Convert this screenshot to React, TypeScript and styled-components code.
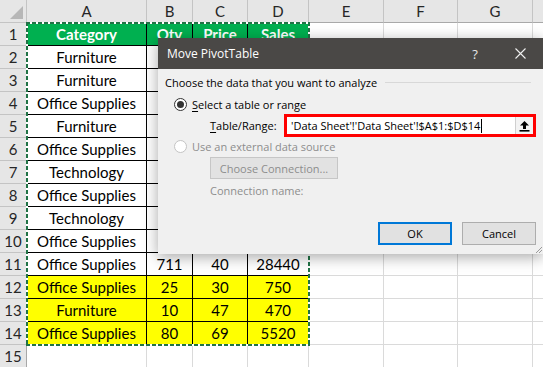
import React from "react";
import styled, { createGlobalStyle, css } from "styled-components";

const GlobalStyle = createGlobalStyle`
  html, body {
    margin: 0;
    padding: 0;
    background: #fff;
    overflow: hidden;
  }
`;

// last column (H) is only partly on screen, its letter is off to the right
const COLS = ["A", "B", "C", "D", "E", "F", "G", ""];

type Row = [string, number, number, number];

const ROWS: Row[] = [
  ["Furniture", 12, 25, 300],
  ["Furniture", 15, 20, 300],
  ["Office Supplies", 30, 12, 360],
  ["Furniture", 11, 45, 495],
  ["Office Supplies", 22, 15, 330],
  ["Technology", 14, 60, 840],
  ["Office Supplies", 40, 10, 400],
  ["Technology", 13, 80, 1040],
  ["Office Supplies", 50, 8, 400],
  ["Office Supplies", 711, 40, 28440],
  ["Office Supplies", 25, 30, 750],
  ["Furniture", 10, 47, 470],
  ["Office Supplies", 80, 69, 5520],
];

const Page = styled.div`
  position: relative;
  width: 543px;
  height: 367px;
  overflow: hidden;
  font-family: Lato, "Open Sans", sans-serif;
`;

const Sheet = styled.div`
  display: grid;
  grid-template-columns: 27px 120px 46px 55px 61px 75px 74px 75px 40px;
  grid-auto-rows: 23px;
`;

const HeaderBase = css`
  box-sizing: border-box;
  background: #e6e6e6;
  border-right: 1px solid #c4c4c4;
  border-bottom: 1px solid #c4c4c4;
  color: #262626;
  font-size: 15px;
  display: flex;
  align-items: center;
  justify-content: center;
`;

const Corner = styled.div`
  ${HeaderBase};
  position: relative;

  &::after {
    content: "";
    position: absolute;
    right: 3px;
    bottom: 3px;
    border-style: solid;
    border-width: 0 0 13px 13px;
    border-color: transparent transparent #b7b7b7 transparent;
  }
`;

const ColHead = styled.div`
  ${HeaderBase};
  border-bottom-color: #a8a8a8;
`;

const RowHead = styled.div`
  ${HeaderBase};
  border-right-color: #a8a8a8;
`;

type Kind = "head" | "data" | "yellow" | "empty";

const Cell = styled.div<{ $kind: Kind }>`
  box-sizing: border-box;
  display: flex;
  align-items: center;
  justify-content: center;
  font-size: 15px;
  white-space: nowrap;
  overflow: hidden;
  color: #000;
  border-right: 1px solid #000;
  border-bottom: 1px solid #000;
  background: #fff;

  ${(p) =>
    p.$kind === "head" &&
    css`
      background: #00b050;
      color: #fff;
      font-weight: 700;
    `}
  ${(p) =>
    p.$kind === "yellow" &&
    css`
      background: #ffff00;
    `}
  ${(p) =>
    p.$kind === "empty" &&
    css`
      border-right-color: #dadada;
      border-bottom-color: #dadada;
    `}
`;

const Ants = styled.div`
  position: absolute;
  left: 26px;
  top: 22px;
  width: 284px;
  height: 324px;
  pointer-events: none;
  background:
    repeating-linear-gradient(90deg, #217346 0 4px, #fff 4px 6px) top / 100% 2px no-repeat,
    repeating-linear-gradient(90deg, #217346 0 4px, #fff 4px 6px) bottom / 100% 2px no-repeat,
    repeating-linear-gradient(180deg, #217346 0 4px, #fff 4px 6px) left / 2px 100% no-repeat,
    repeating-linear-gradient(180deg, #217346 0 4px, #fff 4px 6px) right / 2px 100% no-repeat;
`;

/* dialog */

const Dialog = styled.div`
  position: absolute;
  left: 158px;
  top: 38px;
  width: 385px;
  height: 216px;
  display: flex;
  flex-direction: column;
  background: #f0f0f0;
  box-shadow: 0 3px 14px rgba(0, 0, 0, 0.35);
  font-family: "Open Sans", "Noto Sans", sans-serif;
  font-size: 11px;
  color: #000;
`;

const TitleBar = styled.div`
  height: 31px;
  flex: none;
  display: flex;
  align-items: center;
  background: #4a4846;
  color: #fff;
  padding-left: 9px;
  font-size: 12px;
`;

const Title = styled.div`
  flex: 1;
`;

const TitleIcon = styled.div<{ $w: number }>`
  width: ${(p) => p.$w}px;
  display: flex;
  justify-content: center;
  color: #e8e8e8;
  font-size: 13px;
`;

const Body = styled.div`
  flex: 1;
  display: flex;
  flex-direction: column;
  padding: 5px 7px 9px 7px;
  position: relative;
`;

const Heading = styled.div`
  display: flex;
  align-items: center;
  height: 16px;

  &::after {
    content: "";
    flex: 1;
    height: 1px;
    background: #d8d8d8;
    margin: 0 5px 0 8px;
  }
`;

const RadioRow = styled.label<{ $disabled?: boolean; $top: number }>`
  display: flex;
  align-items: center;
  gap: 5px;
  height: 16px;
  margin-top: ${(p) => p.$top}px;
  padding-left: 9px;
  color: ${(p) => (p.$disabled ? "#8d8d8d" : "#000")};
`;

const Radio = styled.span<{ $checked?: boolean; $disabled?: boolean }>`
  box-sizing: border-box;
  width: 13px;
  height: 13px;
  border-radius: 50%;
  background: #fff;
  border: 1px solid ${(p) => (p.$disabled ? "#c4c4c4" : "#333")};
  display: flex;
  align-items: center;
  justify-content: center;

  &::after {
    content: "";
    width: 7px;
    height: 7px;
    border-radius: 50%;
    background: ${(p) => (p.$checked ? "#333" : "transparent")};
  }
`;

// access key: first letter underlined
const AccessText = styled.span`
  display: inline-block;

  &::first-letter {
    text-decoration: underline;
    text-underline-offset: 2px;
  }
`;

const RangeRow = styled.div`
  display: flex;
  align-items: center;
  margin-top: 2px;
  padding-left: 45px;
`;

const RangeLabel = styled(AccessText)`
  width: 74px;
  flex: none;
`;

const RangeBox = styled.div`
  flex: 1;
  height: 23px;
  box-sizing: border-box;
  border: 3px solid #ff0000;
  display: flex;
  background: #fff;
`;

const RangeText = styled.div`
  flex: 1;
  display: flex;
  align-items: center;
  padding-left: 4px;
  white-space: nowrap;
`;

const Caret = styled.span`
  width: 1px;
  height: 14px;
  background: #000;
  margin-left: 1px;
`;

const PickButton = styled.div`
  width: 17px;
  flex: none;
  border-left: 1px solid #cfcfcf;
  background: #f3f3f3;
  display: flex;
  align-items: center;
  justify-content: center;
`;

const ConnectButton = styled.div`
  margin: 3px 0 0 45px;
  width: 128px;
  height: 22px;
  box-sizing: border-box;
  border: 1px solid #c6c6c6;
  background: #e2e2e2;
  color: #8d8d8d;
  display: flex;
  align-items: center;
  justify-content: center;
`;

const MutedText = styled.div`
  margin: 3px 0 0 45px;
  height: 16px;
  display: flex;
  align-items: center;
  color: #8d8d8d;
`;

const Footer = styled.div`
  margin-top: auto;
  display: flex;
  justify-content: flex-end;
  gap: 10px;
`;

const DialogButton = styled.div<{ $primary?: boolean }>`
  box-sizing: border-box;
  width: 74px;
  height: 23px;
  background: #e1e1e1;
  border: ${(p) => (p.$primary ? "2px solid #0078d7" : "1px solid #adadad")};
  display: flex;
  align-items: center;
  justify-content: center;
`;

const Grip = styled.svg`
  position: absolute;
  right: 1px;
  bottom: 1px;
`;

const UploadIcon = () => (
  <svg width="11" height="12" viewBox="0 0 11 12">
    <path d="M5.5 1 L10 5.5 H7 V9 H4 V5.5 H1 Z" fill="#000" />
    <rect x="0.5" y="10" width="10" height="1.6" fill="#000" />
  </svg>
);

const CloseIcon = () => (
  <svg width="11" height="11" viewBox="0 0 11 11">
    <path d="M0.5 0.5 L10.5 10.5 M10.5 0.5 L0.5 10.5" stroke="#f0f0f0" strokeWidth="1.1" />
  </svg>
);

const rowKind = (r: number): Kind => (r >= 12 ? "yellow" : "data");

export default function App() {
  const lines: React.ReactNode[] = [];
  for (let r = 1; r <= 15; r++) {
    lines.push(<RowHead key={`h${r}`}>{r}</RowHead>);
    if (r === 1) {
      ["Category", "Qty", "Price", "Sales"].forEach((t, i) =>
        lines.push(
          <Cell key={`1-${i}`} $kind="head">
            {t}
          </Cell>
        )
      );
    } else if (r <= 14) {
      const row = ROWS[r - 2];
      row.forEach((v, i) =>
        lines.push(
          <Cell key={`${r}-${i}`} $kind={rowKind(r)}>
            {v}
          </Cell>
        )
      );
    } else {
      for (let i = 0; i < 4; i++) lines.push(<Cell key={`${r}-${i}`} $kind="empty" />);
    }
    for (let i = 4; i < 8; i++) lines.push(<Cell key={`${r}-e${i}`} $kind="empty" />);
  }

  return (
    <Page>
      <GlobalStyle />
      <Sheet>
        <Corner />
        {COLS.map((c, i) => (
          <ColHead key={i}>{c}</ColHead>
        ))}
        {lines}
      </Sheet>
      <Ants />

      <Dialog>
        <TitleBar>
          <Title>Move PivotTable</Title>
          <TitleIcon $w={44}>?</TitleIcon>
          <TitleIcon $w={46}>
            <CloseIcon />
          </TitleIcon>
        </TitleBar>
        <Body>
          <Heading>Choose the data that you want to analyze</Heading>
          <RadioRow $top={6}>
            <Radio $checked />
            <AccessText>Select a table or range</AccessText>
          </RadioRow>
          <RangeRow>
            <RangeLabel>Table/Range:</RangeLabel>
            <RangeBox>
              <RangeText>
                'Data Sheet'!'Data Sheet'!$A$1:$D$14
                <Caret />
              </RangeText>
              <PickButton>
                <UploadIcon />
              </PickButton>
            </RangeBox>
          </RangeRow>
          <RadioRow $top={1} $disabled>
            <Radio $disabled />
            <span>Use an external data source</span>
          </RadioRow>
          <ConnectButton>Choose Connection...</ConnectButton>
          <MutedText>Connection name:</MutedText>
          <Footer>
            <DialogButton $primary>OK</DialogButton>
            <DialogButton>Cancel</DialogButton>
          </Footer>
          <Grip width="6" height="6" viewBox="0 0 6 6">
            <path d="M6 0 L0 6 M6 3 L3 6" stroke="#9a9a9a" strokeWidth="1" />
          </Grip>
        </Body>
      </Dialog>
    </Page>
  );
}
